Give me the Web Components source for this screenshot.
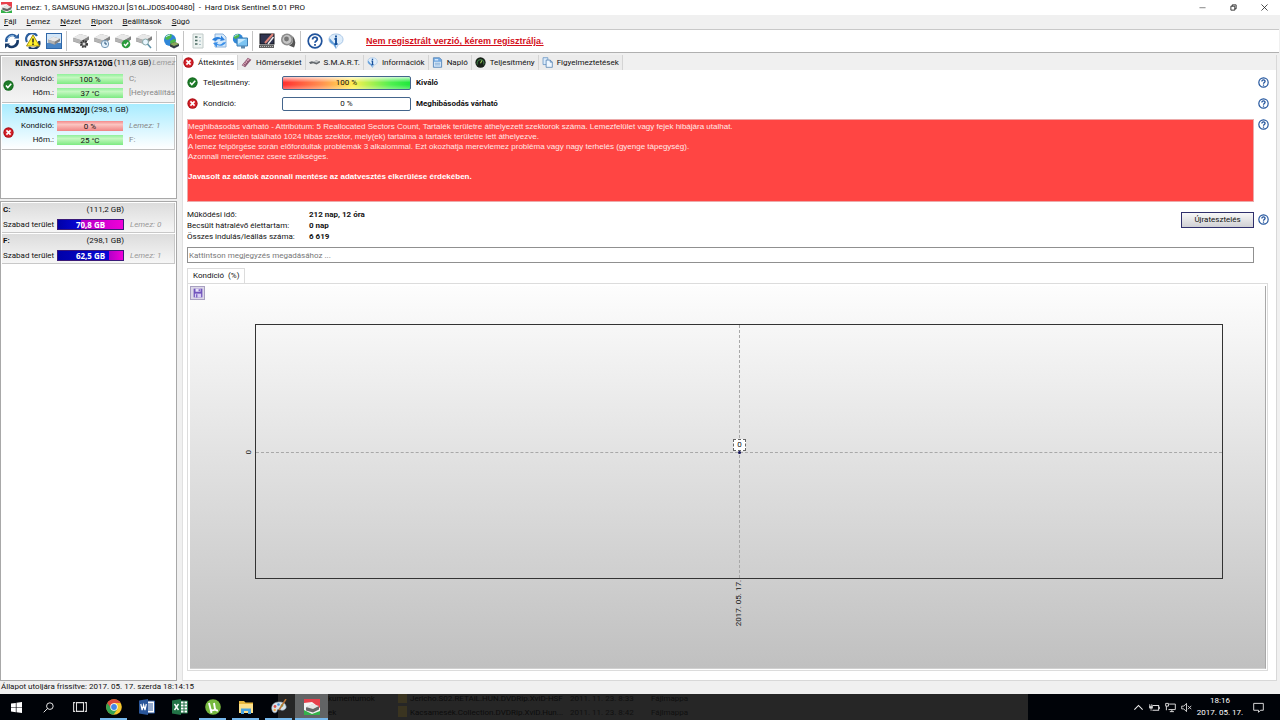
<!DOCTYPE html>
<html lang="hu">
<head>
<meta charset="utf-8">
<title>Hard Disk Sentinel</title>
<style>
html,body{margin:0;height:100%}
body{font-family:Roboto,"Open Sans",sans-serif;font-size:8px;line-height:12px;color:#111;background:#f0f0f0;overflow:hidden}
</style>
</head>
<body>
<sentinel-app></sentinel-app>
<script>
const DISK='<g transform="translate(0 -1)"><path d="M0 6l7-4 9 2.500v3L9 12.500 0 9.500z" fill="#9b9b9b"/><path d="M0 5.500L7 2l9 2.500-7 4z" fill="#e8e8e8"/><path d="M0 6l9 2.500v3.500L0 9z" fill="#b4b4b4"/><path d="M9 8.500l7-4v3l-7 4.500z" fill="#808080"/></g>';
const GLOBE='<circle cx="7" cy="7" r="6" fill="#2f86d8"/><path d="M3 3c2-2 5-2 6-1L8 5 5 7 2 6zM7 8l4-2 2 1-2 5-3 1z" fill="#4db848"/><path d="M3 4q2-2 4-2" stroke="#c8ecff" fill="none"/>';
const ICONS={
app:'<rect width="16" height="16" fill="#f4f4f4"/><path d="M0 0h16v9L8 3 0 4z" fill="#e8404c"/><path d="M0 16v-5l8 4 8-3v4z" fill="#35b14a"/><path d="M2 8.500l6-3 7 2v3l-6 3-7-2z" fill="#666"/><path d="M2 8l6-3 7 2-6 3z" fill="#e6e6e6"/>',
refresh:'<path d="M2.500 9A5.800 5.800 0 0 1 12 3.500" fill="none" stroke="#2c5f9e" stroke-width="2.600"/><path d="M10 5.500h5V.5z" fill="#2c5f9e"/><path d="M13.500 7A5.800 5.800 0 0 1 4 12.500" fill="none" stroke="#173a68" stroke-width="2.600"/><path d="M6 10.500H1v5z" fill="#173a68"/><path d="M3.500 6A5 5 0 0 1 10 3" fill="none" stroke="#9cc8ee"/>',
warn:'<path d="M2 9A5.800 5.800 0 0 1 12 3" fill="none" stroke="#2c5f9e" stroke-width="2.200"/><path d="M14 8A6 6 0 0 1 4 14" fill="none" stroke="#173a68" stroke-width="2.400"/><path d="M8 2l6.500 11h-13z" fill="#fff02c" stroke="#a59112"/><path d="M8 5.500v4M8 10.500v1.500" stroke="#222" stroke-width="1.500"/>',
diskblue:'<rect x=".5" y=".5" width="15" height="15" fill="#d4e7f8" stroke="#2f67a8"/><path d="M1 10h14v5H1z" fill="#4a86c6"/><g transform="translate(2 3) scale(.75)">'+DISK+'</g>',
diskgear:DISK+'<circle cx="11" cy="11" r="3" fill="#777" stroke="#333" stroke-width="2" stroke-dasharray="1.500 1"/><circle cx="11" cy="11" r="1.200" fill="#ddd"/>',
diskclock:DISK+'<circle cx="11" cy="11" r="3.700" fill="#e2f0fa" stroke="#7497b4"/><path d="M11 8.500V11h2" stroke="#26527a" fill="none"/>',
diskcheck:DISK+'<circle cx="11" cy="11" r="4.300" fill="#2b9c3d"/><path d="M9 11l1.500 1.700L13.300 9.500" stroke="#fff" stroke-width="1.300" fill="none"/>',
disklens:DISK+'<circle cx="9.500" cy="9" r="3" fill="#eaf6ff" stroke="#8aa"/><path d="M11.500 11l3.500 4" stroke="#5c90a8" stroke-width="1.500"/>',
globedisk:GLOBE+'<path d="M7 11l5-2 4 2v2l-5 2.500-4-2z" fill="#333c46"/><path d="M7 11l5-2 4 2-5 2z" fill="#8aa85c"/>',
sheet:'<path d="M3 1h10v14H3z" fill="#edf3f1" stroke="#c0cac8"/><path d="M5 4h2.500M5 7.500h2.500M5 11h2.500" stroke="#496a60" stroke-width="1.300"/><path d="M9 4.500h2M9 8h2M9 11.500h2" stroke="#a5bcc4"/>',
sync:'<path d="M4 1h8l3 3v10H4z" fill="#d5e9fb" stroke="#8cb2da"/><path d="M1 7a6 5 0 0 1 9-2V2.500L14 7l-5 1 1-1.500A4 4 0 0 0 5 8z" fill="#2a7fdc"/><path d="M15 9a6 5 0 0 1-9 3v2.500L2 10l5-1-1 1.500a4 4 0 0 0 6-1z" fill="#3a8fe8"/>',
netglobe:'<g transform="scale(.85)">'+GLOBE+'</g><path d="M5 5h10.500v8H5z" fill="#7cc4f2" stroke="#3f7db2"/><path d="M6 6h8L6 11z" fill="#c6e9fd"/><path d="M9 13h4v2.500H9z" fill="#5b89ae"/>',
tweak:'<rect x="1" y="1" width="14" height="10" fill="#303450" stroke="#15161d"/><path d="M0 12h15v3H0z" fill="#626262"/><path d="M1 13.500h13" stroke="#bbb" stroke-dasharray="1 1"/><path d="M14 1L6 10" stroke="#e08478" stroke-width="2"/><path d="M14.500 4L9 11" stroke="#eee" stroke-width="1.500"/>',
speaker:'<circle cx="7" cy="6.500" r="6" fill="#8c8c8c"/><circle cx="7" cy="6.500" r="4.400" fill="#c6c6c6"/><circle cx="6.500" cy="6" r="2.400" fill="#777"/><path d="M12 3.500q2 3 0 7l-3 2 5 2q3-6-1-11z" fill="#555"/>',
help:'<circle cx="8" cy="8" r="6.800" fill="#fff" stroke="#20539c" stroke-width="1.700"/><path d="M5.600 6.400C5.600 3.400 10.500 3.500 10.300 6.300 10.200 8 8 8 8 9.800M8 11v1.700" fill="none" stroke="#20539c" stroke-width="1.800"/>',
info:'<path d="M8 1C3.500 1 1 3.500 1 6.500S3.500 11 5.500 11.500L8 15.500l2.500-4C13 11 15 9.500 15 6.500S12.500 1 8 1z" fill="#deedfb" stroke="#a8c6e6"/><path d="M1.500 5q-1 4.500 4 6.500l2.500 4v-3L6 10z" fill="#5f9bd8"/><path d="M8 2.500v2M6.500 6H8v5M6.500 11h3" fill="none" stroke="#15509b" stroke-width="1.900"/>',
ok:'<circle cx="8" cy="8" r="7.500" fill="#176d21"/><circle cx="8" cy="8" r="5.800" fill="#1f7c2a"/><path d="M4.300 8l2.700 3 5-5.500" fill="none" stroke="#fff" stroke-width="2.200"/>',
bad:'<circle cx="8" cy="8" r="7.500" fill="#ad1017"/><circle cx="8" cy="8" r="6" fill="#d5222a"/><path d="M5 5l6 6M11 5l-6 6" stroke="#fff" stroke-width="2.400"/>',
thermo:'<path d="M1 12L10 1l5 3L6 15z" fill="#8a5570"/><path d="M2.500 11.500L10.500 2l2 1.200L4.500 13z" fill="#d9a5b8"/><path d="M4 10l2 1.500M6 8l2 1.500M8 5.500L10 7" stroke="#69394f"/>',
smart:'<path d="M0 7.500l4-1.500 3 1 3-2 6 1v2l-5 3-5-2-4 1z" fill="#60666b"/><path d="M6 7l4-1.500 5 1-4 2z" fill="#c4c8cb"/>',
log:'<path d="M2 1h9l3 3v11H2z" fill="#73a9e0" stroke="#4c7cb0"/><path d="M4 3h5v2H4z" fill="#d8ebff"/><path d="M3 7h10v7H3z" fill="#e8f2fc"/><path d="M4 9h8M4 11.500h8" stroke="#4a87c4"/>',
gauge:'<circle cx="8" cy="8" r="7.500" fill="#182018"/><path d="M3.500 11A5 5 0 1 1 12.500 11" stroke="#3c7a44" stroke-width="1.500" fill="none"/><path d="M8 9l2-4" stroke="#a6d65b" stroke-width="1.500"/>',
pages:'<path d="M1.500 1h7v10h-7z" fill="#dcecfb" stroke="#5688bd"/><path d="M6 4.500h6l3 3V15H6z" fill="#eff7ff" stroke="#3f72a8"/><path d="M12 4.500v3h3" fill="none" stroke="#3f72a8"/>',
save:'<path d="M1 1h14v14H1z" fill="#7154bd"/><path d="M4 1h8v5H4z" fill="#e7e1fa"/><path d="M9 2h2v3H9z" fill="#7154bd"/><path d="M3 9h10v6H3z" fill="#d9d0f3"/><path d="M5 10h2v5H5z" fill="#7154bd"/>',
min:'<path d="M1 8.500h14" stroke="#777" stroke-width="2"/>',
restore:'<path d="M2 5h9v9H2zM5 5V2h9v9h-3" fill="none" stroke="#222" stroke-width="2"/>',
close:'<path d="M1 1l14 14M15 1L1 15" stroke="#222" stroke-width="1.800"/>',
start:'<path d="M0 2.300l7-1v6.300H0zM8 1.200L16 0v7.600H8zM0 8.500h7v6.300l-7-1zM8 8.500h8V16l-8-1.200z" fill="#fff"/>',
search:'<circle cx="10" cy="6" r="4.800" fill="none" stroke="#fff" stroke-width="1.300"/><path d="M6.500 9.500L1 15" stroke="#fff" stroke-width="1.300"/>',
taskview:'<path d="M4 3h8v10H4zM2.500 3H.7v10h1.800M13.500 3h1.800v10h-1.800" fill="none" stroke="#ddd" stroke-width="1.200"/>',
chrome:'<circle cx="8" cy="8" r="7.800" fill="#f6c72d"/><path d="M8 8L1.250 4.100A7.800 7.800 0 0 0 7.500 15.800L11.400 10z" fill="#35a254"/><path d="M1.250 4.100A7.800 7.800 0 0 1 14.750 4.100H8L5 9z" fill="#dd4b3e"/><circle cx="8" cy="8" r="3.700" fill="#fff"/><circle cx="8" cy="8" r="2.900" fill="#4285e8"/>',
word:'<path d="M8 2h7.500v12H8z" fill="#fff" stroke="#2b579a"/><path d="M9 5h5M9 7h5M9 9h5M9 11h5" stroke="#2b579a"/><path d="M0 1.500L9 0v16l-9-1.500z" fill="#2b579a"/><path d="M1.800 5l1.300 6L4.600 6l1.400 5L7.300 5" fill="none" stroke="#fff" stroke-width="1.200"/>',
excel:'<path d="M8 2h7.500v12H8z" fill="#fff" stroke="#217346"/><path d="M9 5h6M9 8h6M9 11h6M12 2v12" stroke="#217346"/><path d="M0 1.500L9 0v16l-9-1.500z" fill="#217346"/><path d="M2.500 5l4 6M6.500 5l-4 6" stroke="#fff" stroke-width="1.400"/>',
torrent:'<circle cx="8" cy="8" r="7.800" fill="#76b83f"/><path d="M4 4l1.500 6c.5 1.800 3.800 1.800 4.500 0L9 4M10 9.500q.8 2.500 3 1.800M5.500 10l1 4" fill="none" stroke="#fff" stroke-width="1.900"/>',
folder:'<path d="M1 2h5l1.500 1.500H15V14H1z" fill="#e8b83f"/><path d="M1 5h14v9H1z" fill="#fde08a"/><path d="M3 15V9.500h10V15h-3v-3H6v3z" fill="#4aa3df"/>',
paint:'<path d="M8 3C2 3 0 7 1 11c1 4 5 3 5 1s2-2 4-1 6-1 5-4-3-4-7-4z" fill="#d7e3ec" stroke="#93a7b8" stroke-width=".6"/><circle cx="4" cy="7.500" r="1.400" fill="#d9534f"/><circle cx="7.500" cy="5.500" r="1.300" fill="#4a90d9"/><circle cx="11" cy="6.500" r="1.300" fill="#5cb85c"/><circle cx="3.700" cy="11" r="1.200" fill="#f0ad4e"/><path d="M15 0L8 11" stroke="#b87333" stroke-width="1.500"/>',
up:'<path d="M2 11l6-6 6 6" fill="none" stroke="#eee" stroke-width="1.600"/>',
power:'<path d="M5 5h9v7H5M15 7v3" fill="none" stroke="#ddd" stroke-width="1.500"/><path d="M1 3v3M4 3v3M0 6h5v3H1zM3 9v4" fill="#ddd" stroke="#ddd"/>',
net:'<path d="M6 3h9v8H5M7 14h6M10 11v3" fill="none" stroke="#ddd" stroke-width="1.400"/><path d="M1 2h4v4H1zM2 6v6" fill="none" stroke="#ddd" stroke-width="1.400"/>',
mute:'<path d="M1 6h3l4-4v12L4 10H1z" fill="none" stroke="#ddd" stroke-width="1.300"/><path d="M10 5.500l5 5M15 5.500l-5 5" stroke="#ddd" stroke-width="1.300"/>',
note:'<path d="M1 2h14v10h-4l-3 3v-3H1z" fill="none" stroke="#eee" stroke-width="1.300"/>'
};
function define(name,html,setup){
  customElements.define(name,class extends HTMLElement{
    constructor(){super();this.attachShadow({mode:'open'})}
    connectedCallback(){
      this.shadowRoot.innerHTML='<style>*{box-sizing:border-box}button{font:inherit;color:inherit;margin:0;padding:0;border:0;background:none}:host([hidden]){display:none}</style>'+(typeof html==='function'?html(this):html);
      if(setup)setup(this,this.shadowRoot);
    }
  });
}
define('app-icon',h=>`<style>:host{display:block;flex:none;width:var(--size,12px);height:var(--size,12px)}svg{display:block;width:100%;height:100%}</style><svg viewBox="0 0 16 16" aria-hidden="true">${ICONS[h.getAttribute('name')]}</svg>`);

define('title-bar',`<style>:host{display:flex;align-items:center;height:15px;background:#fff;padding-left:1px;color:#111}
app-icon{--size:11px}span{flex:1;padding-left:4px;white-space:pre}button{width:31px;display:grid;place-items:center}button app-icon{--size:7px}</style>
<app-icon name="app"></app-icon><span><slot></slot></span>
<button aria-label="Kis méret"><app-icon name="min"></app-icon></button><button aria-label="Visszaállítás"><app-icon name="restore"></app-icon></button><button aria-label="Bezárás"><app-icon name="close"></app-icon></button>`);

define('menu-bar',`<style>:host{display:flex;gap:10px;height:14px;padding-left:4px;background:#f0f0f0}::slotted(button){font:inherit;border:0;background:none;padding:0;color:inherit}</style><slot></slot>`);

define('tool-bar',`<style>:host{display:flex;align-items:center;height:24px;background:#fff;border-top:1px solid #c8c8c8;border-bottom:1px solid #b0b0b0;padding-left:1px;margin-right:1px}
.tool{width:21px;display:grid;place-items:center}.tool app-icon{--size:16px}hr{width:1px;height:20px;margin:0 3px 0 2px;border:0;background:#c4c4c4}
a{font:bold 9px/12px "Liberation Sans",Arial,sans-serif;color:#d40f1c;margin-left:20px}</style>
<div style="display:contents" id="tools"></div><a href="#register">Nem regisztrált verzió, kérem regisztrálja.</a>`,(h,r)=>{
 const names='refresh warn diskblue | diskgear diskclock diskcheck disklens | globedisk | sheet sync netglobe | tweak speaker | help info'.split(' ');
 r.getElementById('tools').innerHTML=names.map(n=>n==='|'?'<hr>':`<button class="tool" aria-label="${n}"><app-icon name="${n}"></app-icon></button>`).join('');
});

define('level-bar',h=>`<style>:host{display:block;height:10px;line-height:11px;text-align:center;background:linear-gradient(#8ff09a,#c4f8c0 35%,#7dea82)}
:host([kind=bad]){background:linear-gradient(#f48a8a,#fbc4c0 35%,#f08484)}
:host([kind=space]){background:linear-gradient(90deg,#0000a8,#0808d8 var(--used),#b400c8 var(--used),#f000d8);color:#fff;font-weight:bold;border:1px solid #3a1a78;line-height:10px;height:11px;font-family:"Open Sans",sans-serif}</style><slot></slot>`);

define('disk-card',h=>`<style>:host{display:grid;grid-template-columns:13px 36px 66px 1fr;grid-template-rows:15px 14px 13px;column-gap:3px;align-items:center;height:46px;margin-bottom:1px;background:linear-gradient(#dedede,#f4f4f4);border-right:1px solid #c8c8c8;border-bottom:1px solid #c0c0c0;white-space:nowrap}
:host([selected]){background:linear-gradient(#a8ecff,#d8f6ff 55%,#fff)}
.t{grid-column:1/-1;padding-left:13px;align-self:start;display:flex;gap:1px}.t b{font-family:"Open Sans",sans-serif}app-icon{grid-row:2/4;--size:11px;margin-left:1px}.l{text-align:right}.s{color:#888;padding-left:3px}.t ::slotted(i){color:#999}</style>
<div class="t"><b>${h.getAttribute('name')}</b><slot></slot></div>
<app-icon name="${h.getAttribute('state')}"></app-icon>
<span class="l">Kondíció:</span><level-bar kind="${h.getAttribute('state')}">${h.getAttribute('health')}</level-bar><span class="s"><slot name="a"></slot></span>
<span class="l">Hőm.:</span><level-bar>${h.getAttribute('temp')}</level-bar><span class="s"><slot name="b"></slot></span>`);

define('volume-card',h=>`<style>:host{display:grid;grid-template-columns:53px 67px 1fr;grid-template-rows:14px 15px;column-gap:1px;align-items:center;height:30px;margin-bottom:1px;padding-left:1px;background:linear-gradient(#dcdcdc,#f6f6f6);border-right:1px solid #c8c8c8;border-bottom:1px solid #c8c8c8;white-space:nowrap}
.c{text-align:right;grid-column:2/3}i{color:#999;padding-left:5px}level-bar{--used:${h.getAttribute('used')}}</style>
<b>${h.getAttribute('name')}</b><span class="c">${h.getAttribute('size')}</span><span style="grid-column:1">Szabad terület</span><level-bar kind="space">${h.getAttribute('free')}</level-bar><i>${h.getAttribute('disk')}</i>`);

define('tab-item',h=>`<style>:host{display:block}button{display:flex;align-items:center;gap:4px;height:15px;padding:0 3px;border-right:1px solid #d4d4d4;background:#ececec;white-space:nowrap}:host([active]) button{background:#fff;padding-left:0}app-icon{--size:11px}</style><button role="tab"><app-icon name="${h.getAttribute('icon')}"></app-icon><slot></slot></button>`);

define('help-button',`<style>:host{display:block}button{display:block}app-icon{--size:11px}</style><button aria-label="Súgó"><app-icon name="help"></app-icon></button>`);

define('metric-row',h=>`<style>:host{display:grid;grid-template-columns:11px 84px 129px 1fr 18px;align-items:center;height:21px}span{padding-left:5px}.v{font-weight:bold}help-button{justify-self:center}
.m{height:14px;border:1px solid #44658c;border-radius:2px;line-height:12px;text-align:center;background:#fff}
:host([full]) .m{background:linear-gradient(rgba(255,255,255,.75),rgba(255,255,255,0) 45%,rgba(255,255,255,0) 65%,rgba(255,255,255,.3)),linear-gradient(90deg,#ff3030,#ff9050 30%,#fff050 55%,#50f050 85%,#20e83c)}</style>
<app-icon style="--size:11px" name="${h.getAttribute('state')}"></app-icon><span>${h.getAttribute('label')}</span><div class="m">${h.getAttribute('level')}</div><span class="v"><slot></slot></span><help-button></help-button>`);

define('condition-chart',`<style>:host{display:flex;flex-direction:column;min-height:0}
.tab{align-self:flex-start;height:15px;padding:0 5px;border:1px solid #dcdcdc;border-bottom:0;background:#fff;white-space:pre}
.frame{flex:1;display:flex;border:1px solid #dcdcdc;padding:2px 1px 1px 2px;min-height:0}
.area{flex:1;position:relative;display:flex;padding:38px 42px 89px 65px;background:linear-gradient(#fdfdfd,#c0c0c0);border-right:1px solid #a8a8a8;border-bottom:1px solid #d0d0d0}
.save{position:absolute;left:0;top:0;width:15px;height:14px;display:grid;place-items:center;border:1px solid #a8a0c0;background:#dcd8e8}.save app-icon{--size:10px}
.plot{flex:1;position:relative;border:1px solid #333}
.h,.v{position:absolute}.h{left:0;right:0;top:50%;border-top:1px dashed #a8a8a8}.v{top:0;bottom:0;left:50%;border-left:1px dashed #a8a8a8}
.dot{position:absolute;left:50%;top:50%;width:3px;height:3px;margin:-1px;background:#14145c;border-radius:50%}
.pt{position:absolute;left:50%;top:50%;width:13px;height:12px;margin:-13px 0 0 -6px;border:1px dashed #666;background:#fff;line-height:10px;text-align:center}
.x,.y{position:absolute;writing-mode:vertical-rl;transform:rotate(180deg);line-height:10px;color:#111;white-space:nowrap}
.x{left:50%;top:100%;margin:2px 0 0 -5px}.y{right:100%;top:50%;margin:-2px 2px 0 0}</style>
<button class="tab" role="tab">Kondíció  (%)</button>
<div class="frame"><div class="area"><button class="save" aria-label="Mentés"><app-icon name="save"></app-icon></button>
<div class="plot"><div class="h"></div><div class="v"></div><div class="dot"></div><div class="pt">0</div><span class="y">0</span><span class="x">2017. 05. 17.</span></div></div></div>`);

define('disk-overview',`<style>:host{display:flex;flex-direction:column;min-width:0;background:#fff;border-right:1px solid #d8d8d8;border-left:1px solid #e0e0e0;border-bottom:1px solid #d8d8d8}
.tabs{display:flex;height:15px;background:#f0f0f0}
.body{flex:1;display:flex;flex-direction:column;padding:2px 4px 9px 4px;min-height:0}
.row{display:grid;grid-template-columns:1fr 18px;justify-items:stretch}.row help-button{justify-self:center}
metric-row:nth-of-type(2){margin-bottom:5px}
.alert{height:83px;border:1px solid #ecaaaa;background:#ff4543;color:#ffe9e6;font:8px/10px "Liberation Sans",Arial,sans-serif;padding:2px 0}
p{margin:0}.alert b{display:block;margin-top:10px;color:#fff}
.stats{margin-top:6px}dl{margin:0;display:grid;grid-template-columns:122px 1fr;line-height:11px}dd{margin:0;font-weight:bold}
.info{display:flex;justify-content:space-between;align-items:flex-start;margin-top:1px}
.retest{width:73px;height:16px;margin-top:3px;border:1px solid #30306c;background:linear-gradient(#f8f8f8,#d0d0d4)}
.retest-help{margin-top:6px}
input{font:inherit;height:16px;margin:5px 0 0;padding:0 1px;border:1px solid #909090;background:#fff;min-width:0;width:100%;border-radius:0}input::placeholder{color:#777}
condition-chart{flex:1;margin:5px 4px 0 0}</style>
<div class="tabs" role="tablist"><tab-item icon="bad" active>Áttekintés</tab-item><tab-item icon="thermo">Hőmérséklet</tab-item><tab-item icon="smart">S.M.A.R.T.</tab-item><tab-item icon="info">Információk</tab-item><tab-item icon="log">Napló</tab-item><tab-item icon="gauge">Teljesítmény</tab-item><tab-item icon="pages">Figyelmeztetések</tab-item></div>
<div class="body">
<metric-row full state="ok" label="Teljesítmény:" level="100 %">Kiváló</metric-row>
<metric-row state="bad" label="Kondíció:" level="0 %">Meghibásodás várható</metric-row>
<div class="row"><div class="alert"><p>Meghibásodás várható - Attribútum: 5 Reallocated Sectors Count, Tartalék területre áthelyezett szektorok száma. Lemezfelület vagy fejek hibájára utalhat.</p><p>A lemez felületén található 1024 hibás szektor, mely(ek) tartalma a tartalék területre lett áthelyezve.</p><p>A lemez felpörgése során előfordultak problémák 3 alkalommal. Ezt okozhatja merevlemez probléma vagy nagy terhelés (gyenge tápegység).</p><p>Azonnali merevlemez csere szükséges.</p><b>Javasolt az adatok azonnali mentése az adatvesztés elkerülése érdekében.</b></div><help-button></help-button></div>
<div class="row stats"><div class="info"><dl><dt>Működési idő:</dt><dd>212 nap, 12 óra</dd><dt>Becsült hátralévő élettartam:</dt><dd>0 nap</dd><dt>Összes indulás/leállás száma:</dt><dd>6 619</dd></dl><button class="retest">Újratesztelés</button></div><help-button class="retest-help"></help-button></div>
<div class="row"><input aria-label="Megjegyzés" placeholder="Kattintson megjegyzés megadásához ..."></div>
<condition-chart></condition-chart></div>`);

define('status-bar',`<style>:host{display:block;height:13px;padding-left:1px;background:#f0f0f0}</style><slot></slot>`);

define('task-bar',`<style>:host{display:flex;position:relative;height:26px;background:linear-gradient(90deg,#000308 278px,#262626 278px 80.300%,#000308 80.300%);overflow:hidden;color:#fff}
.b{width:32px;height:100%;display:grid;place-items:center;position:relative}.b app-icon{--size:11px}.p{width:33px}.p app-icon{--size:16px}.p.on::after{content:"";position:absolute;left:3px;right:3px;bottom:0;height:2px;background:#76b9ed}.p.active{background:#626465}.p.active::after{left:0;right:0}
.b.tv{margin-right:1px}.b.tv app-icon{--size:14px}
.ghost{position:absolute;left:328px;top:-2px;display:grid;grid-template-columns:70px 12px 160px 81px 60px;line-height:14px;color:#0c0c0c;white-space:nowrap}.dim{color:#101010}.ghost s{width:9px;height:11px;background:#3a3420}
.tray{margin-left:auto;display:flex;align-items:center;padding-right:10px}.tray button{width:16px;display:grid;place-items:center}.tray app-icon{--size:11px}.clock{width:52px;text-align:center;line-height:12px}.tray .n{width:24px}</style>
<div class="ghost" aria-hidden="true"><span>kumentumok</span><s></s><span>Jericho.S02.RETAiL.HUN.DVDRip.XviD-HSF</span><span class="dim">2011. 11. 23. 8:33</span><span class="dim">Fájlmappa</span><span>ek</span><s></s><span>Kacsamesék.Collection.DVDRip.XviD.Hun...</span><span class="dim">2011. 11. 23. 8:42</span><span class="dim">Fájlmappa</span></div>
<button class="b" aria-label="Start"><app-icon name="start"></app-icon></button><button class="b" aria-label="Keresés"><app-icon name="search"></app-icon></button><button class="b tv" aria-label="Feladatnézet"><app-icon name="taskview"></app-icon></button>
<button class="b p on" aria-label="Chrome"><app-icon name="chrome"></app-icon></button><button class="b p" aria-label="Word"><app-icon name="word"></app-icon></button><button class="b p" aria-label="Excel"><app-icon name="excel"></app-icon></button><button class="b p on" aria-label="µTorrent"><app-icon name="torrent"></app-icon></button><button class="b p on" aria-label="Fájlkezelő"><app-icon name="folder"></app-icon></button><button class="b p on" aria-label="Paint"><app-icon name="paint"></app-icon></button><button class="b p on active" aria-label="Hard Disk Sentinel"><app-icon name="app"></app-icon></button>
<div class="tray"><button aria-label="Rejtett ikonok"><app-icon name="up"></app-icon></button><button aria-label="Akkumulátor"><app-icon name="power"></app-icon></button><button aria-label="Hálózat"><app-icon name="net"></app-icon></button><button aria-label="Hangerő"><app-icon name="mute"></app-icon></button><div class="clock">18:16<br>2017. 05. 17.</div><button class="n" aria-label="Értesítések"><app-icon name="note"></app-icon></button></div>`);

define('sentinel-app',`<style>:host{display:flex;flex-direction:column;height:100vh}
.work{flex:1;display:grid;grid-template-columns:177px 1fr;column-gap:5px;padding:2px 3px 0 0;min-height:0}
aside{display:grid;grid-template-rows:144px 1fr;row-gap:2px;min-height:0;min-width:0}.panel{background:#fff;border:1px solid #a8a8a8;padding:1px 1px 0;min-width:0}button u{text-underline-offset:1px}</style>
<title-bar>Lemez: 1, SAMSUNG HM320JI [S16LJD0S400480]  -  Hard Disk Sentinel 5.01 PRO</title-bar>
<menu-bar><button><u>F</u>ájl</button><button><u>L</u>emez</button><button><u>N</u>ézet</button><button><u>R</u>iport</button><button><u>B</u>eállítások</button><button><u>S</u>úgó</button></menu-bar>
<tool-bar></tool-bar>
<div class="work"><aside><div class="panel">
<disk-card name="KINGSTON SHFS37A120G" state="ok" health="100 %" temp="37 °C"><span>(111,8 GB)</span><i>Lemez</i><span slot="a">C;</span><span slot="b">[Helyreállítás</span></disk-card>
<disk-card selected name="SAMSUNG HM320JI" state="bad" health="0 %" temp="25 °C"><span>(298,1 GB)</span><i slot="a">Lemez: 1</i><span slot="b">F:</span></disk-card></div>
<div class="panel"><volume-card name="C:" size="(111,2 GB)" free="70,8 GB" disk="Lemez: 0" used="36%"></volume-card><volume-card name="F:" size="(298,1 GB)" free="62,5 GB" disk="Lemez: 1" used="79%"></volume-card></div></aside>
<disk-overview></disk-overview></div>
<status-bar>Állapot utoljára frissítve: 2017. 05. 17. szerda 18:14:15</status-bar>
<task-bar></task-bar>`);
</script>
</body>
</html>
